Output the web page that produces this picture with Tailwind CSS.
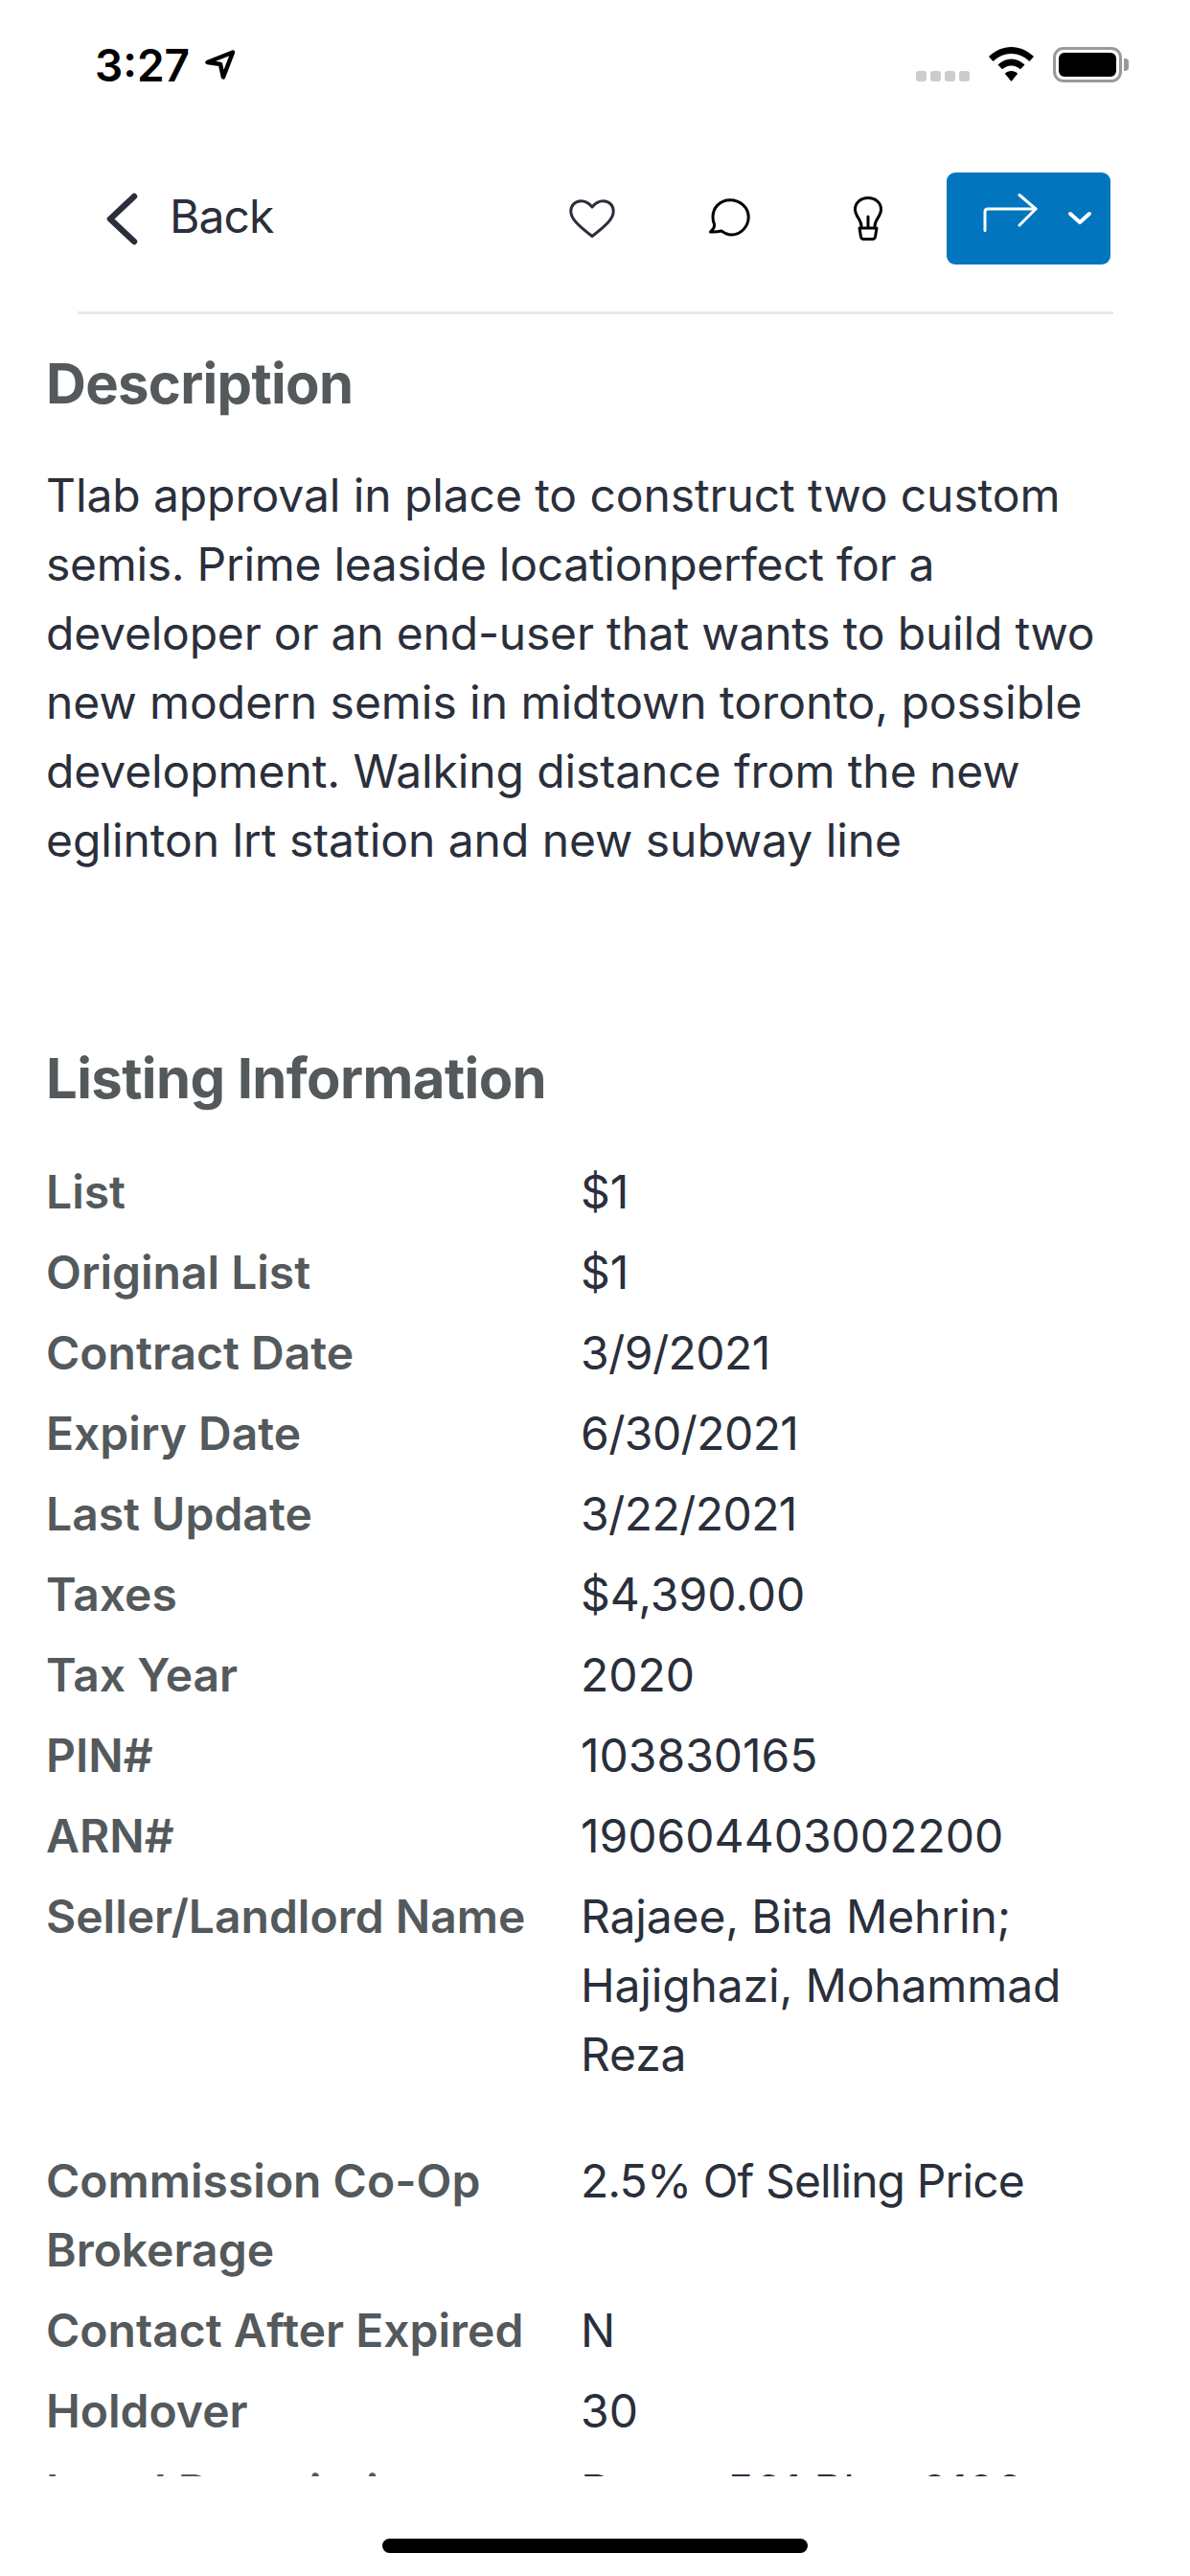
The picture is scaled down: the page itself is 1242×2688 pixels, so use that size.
<!DOCTYPE html>
<html><head><meta charset="utf-8"><script src="https://cdn.jsdelivr.net/npm/@tailwindcss/browser@4"></script></head>
<body class="bg-white">
<div class="w-[1242px] h-[2688px] overflow-hidden bg-white flex flex-col font-['Inter',sans-serif] text-[48px] leading-[72px] text-[#2a2f3b] tracking-[-0.2px]">
  <div class="h-[132px] shrink-0 flex justify-between pl-[99px] pr-[64px] pt-[49px]">
    <div class="flex items-start gap-[16px]">
      <span class="font-semibold text-[46px] leading-[38px] text-black tracking-normal">3:27</span>
      <svg class="mt-[3px]" width="31" height="31" viewBox="0 0 31 31" fill="none" stroke="#000" stroke-width="4.5" stroke-linejoin="round"><path d="M2.5 13 L29 2.5 L19 28.5 L16 15 Z"/></svg>
    </div>
    <div class="flex items-start">
      <div class="flex gap-[4px] mt-[25px] mr-[20px]">
        <i class="w-[11px] h-[11px] rounded-[3px] bg-[#cccccc]"></i><i class="w-[11px] h-[11px] rounded-[3px] bg-[#cccccc]"></i><i class="w-[11px] h-[11px] rounded-[3px] bg-[#cccccc]"></i><i class="w-[11px] h-[11px] rounded-[3px] bg-[#cccccc]"></i>
      </div>
      <svg class="mr-[20px]" width="47" height="36" viewBox="0 0 47 36"><path d="M23.5 0 C32 0 40 3.400 47 10 L42.500 15 C36.800 9.800 30.500 7 23.500 7 C16.500 7 10.200 9.800 4.500 15 L0 10 C7 3.400 15 0 23.500 0Z M23.500 12.500 C28.500 12.500 33.200 14.500 37.500 18.500 L33 23.300 C30 20.700 27 19.400 23.500 19.400 C20 19.400 17 20.700 14 23.300 L9.500 18.500 C13.800 14.500 18.500 12.500 23.500 12.500Z M23.500 25 C26 25 28.200 26 30.200 27.800 L23.500 36 L16.800 27.800 C18.800 26 21 25 23.500 25Z" fill="#000"/></svg>
      <div class="flex items-center">
        <div class="w-[72px] h-[37px] rounded-[11px] border-[3px] border-[#999999] p-[3px]"><div class="w-full h-full rounded-[6px] bg-black"></div></div>
        <div class="ml-[2px] w-[5px] h-[13px] rounded-r-[4px] bg-[#999999]"></div>
      </div>
    </div>
  </div>
  <div class="h-[193px] shrink-0 flex items-start ml-[80px] mr-[83px]">
    <svg class="ml-[30px] mt-[69px]" width="35" height="55" viewBox="0 0 35 55" fill="none" stroke="#2a2f3b" stroke-width="6.500" stroke-linecap="round" stroke-linejoin="round"><path d="M30 4 L5 27.500 L30 51"/></svg>
    <span class="ml-[32px] mt-[58px] tracking-[-0.9px]">Back</span>
    <div class="ml-auto flex items-start">
      <svg class="mt-[76px] mr-[98px]" width="48" height="40" viewBox="0 0 48 40" fill="none" stroke="#2a2f3b" stroke-width="3" stroke-linejoin="round"><path d="M24 8 C20 3 16 1.800 12.500 1.800 C6 1.800 1.800 6.500 1.800 12.500 C1.800 20 9 27 24 38.500 C39 27 46.200 20 46.200 12.500 C46.200 6.500 42 1.800 35.500 1.800 C32 1.800 28 3 24 8Z"/></svg>
      <svg class="mt-[75px] mr-[108px]" width="43" height="40" viewBox="0 0 43 40" fill="none" stroke="#000" stroke-width="3" stroke-linejoin="round"><path d="M5.500 27 C4.500 24.500 4 22 4 19.500 C4 9.500 11.500 1.700 22 1.700 C32.500 1.700 41.200 9.500 41.200 19.500 C41.200 29.500 33 38 23.500 38 C19.500 38 16.500 36.500 13 34 C9 35 5 35.300 1.500 35 C3.500 33 6.300 30.500 5.500 27Z"/></svg>
      <svg class="mt-[73px] mr-[67px]" width="30" height="46" viewBox="0 0 30 46" fill="none" stroke="#000" stroke-width="3" stroke-linecap="round" stroke-linejoin="round"><path d="M8 31 C8 24 1.500 21 1.500 13.500 C1.500 6.500 7.500 1.500 15 1.500 C22.500 1.500 28.500 6.500 28.500 13.500 C28.500 21 22 24 22 31"/><path d="M15 21 V31"/><path d="M6 33 H24 L22.500 42 Q22 44.500 19.500 44.500 H10.500 Q8 44.500 7.500 42 Z"/></svg>
      <div class="mt-[48px] w-[171px] h-[96px] rounded-[9px] bg-[#0275bf] flex items-start pl-[38px]">
        <svg class="mt-[22px]" width="57" height="40" viewBox="0 0 57 40" fill="none" stroke="#fff" stroke-width="3" stroke-linecap="round" stroke-linejoin="round"><path d="M2 38.500 V19 Q2 16 5 16 H55"/><path d="M38 1.500 L55 16 L38 33"/></svg>
        <svg class="ml-[31px] mt-[40px]" width="26" height="15" viewBox="0 0 26 15" fill="none" stroke="#fff" stroke-width="4" stroke-linecap="round" stroke-linejoin="round"><path d="M3 3 L13 12 L23 3"/></svg>
      </div>
    </div>
  </div>
  <div class="h-[3px] shrink-0 ml-[81px] mr-[80px] bg-[#e8e8e8]"></div>
  <div class="h-[2256px] shrink-0 overflow-hidden pl-[48px] pr-[48px]">
    <h2 class="mt-[36px] text-[58px] leading-[72px] font-bold text-[#54595c] tracking-[-0.7px]">Description</h2>
    <p class="mt-[45px]"><span class="block tracking-[-0.1px]">Tlab approval in place to construct two custom</span><span class="block tracking-[-0.3px]">semis. Prime leaside locationperfect for a</span><span class="block tracking-[-0.2px]">developer or an end-user that wants to build two</span><span class="block tracking-[-0.05px]">new modern semis in midtown toronto, possible</span><span class="block tracking-[-0.1px]">development. Walking distance from the new</span><span class="block tracking-[-0.05px]">eglinton lrt station and new subway line</span></p>
    <h2 class="mt-[176px] mb-[47px] text-[58px] leading-[72px] font-bold text-[#54595c] tracking-[-0.6px]">Listing Information</h2>
    <dl class="grid grid-cols-[558px_1fr] gap-y-[12px] tracking-normal">
      <dt class="font-semibold text-[#54595c]">List</dt><dd>$1</dd>
      <dt class="font-semibold text-[#54595c]">Original List</dt><dd>$1</dd>
      <dt class="font-semibold text-[#54595c]">Contract Date</dt><dd class="tracking-[-0.6px]">3/9/2021</dd>
      <dt class="font-semibold text-[#54595c]">Expiry Date</dt><dd class="tracking-[-0.6px]">6/30/2021</dd>
      <dt class="font-semibold text-[#54595c]">Last Update</dt><dd class="tracking-[-0.6px]">3/22/2021</dd>
      <dt class="font-semibold text-[#54595c]">Taxes</dt><dd>$4,390.00</dd>
      <dt class="font-semibold text-[#54595c]">Tax Year</dt><dd>2020</dd>
      <dt class="font-semibold text-[#54595c]">PIN#</dt><dd>103830165</dd>
      <dt class="font-semibold text-[#54595c]">ARN#</dt><dd>190604403002200</dd>
      <dt class="font-semibold text-[#54595c]">Seller/Landlord Name</dt><dd class="mb-[48px] tracking-[-0.15px]">Rajaee, Bita Mehrin;<br>Hajighazi, Mohammad<br>Reza</dd>
      <dt class="font-semibold text-[#54595c]">Commission Co-Op<br>Brokerage</dt><dd class="tracking-[-0.9px]">2.5% Of Selling Price</dd>
      <dt class="font-semibold text-[#54595c]">Contact After Expired</dt><dd>N</dd>
      <dt class="font-semibold text-[#54595c]">Holdover</dt><dd>30</dd>
      <dt class="font-semibold text-[#54595c]">Legal Description</dt><dd>Part <span class="ml-[46px]">561</span> Plan 2120</dd>
    </dl>
  </div>
  <div class="mt-[65px] mx-auto w-[444px] h-[15px] shrink-0 rounded-full bg-black"></div>
</div>
</body></html>
